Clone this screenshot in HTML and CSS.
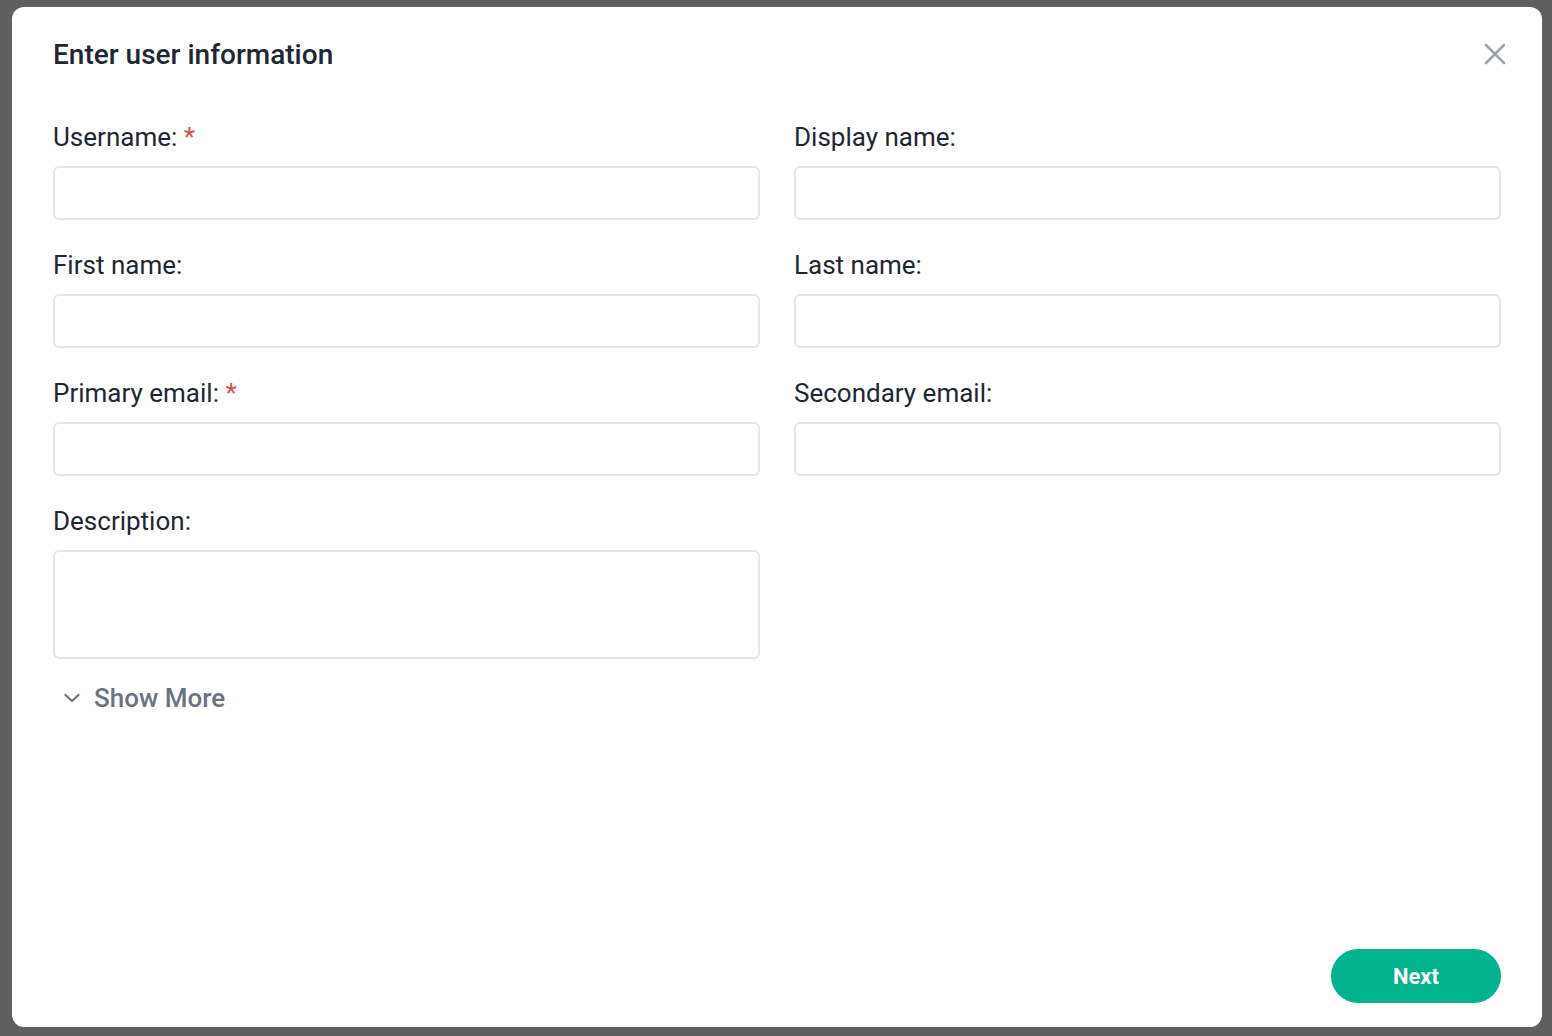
FILE: index.html
```html
<!DOCTYPE html>
<html>
<head>
<meta charset="utf-8">
<link rel="stylesheet" href="styles.css">
</head>
<body>
<div class="modal">
  <div class="header">
    <h1 class="title">Enter user information</h1>
    <button class="close" aria-label="Close">
      <svg width="24" height="24" viewBox="0 0 24 24"><path d="M3 3 L21 21 M21 3 L3 21" stroke="#9ca3af" stroke-width="2.6" stroke-linecap="round"/></svg>
    </button>
  </div>
  <form class="form">
    <div class="field">
      <label class="label">Username: <span class="req">*</span></label>
      <input class="input" type="text">
    </div>
    <div class="field">
      <label class="label">Display name:</label>
      <input class="input" type="text">
    </div>
    <div class="field">
      <label class="label">First name:</label>
      <input class="input" type="text">
    </div>
    <div class="field">
      <label class="label">Last name:</label>
      <input class="input" type="text">
    </div>
    <div class="field">
      <label class="label">Primary email: <span class="req">*</span></label>
      <input class="input" type="text">
    </div>
    <div class="field">
      <label class="label">Secondary email:</label>
      <input class="input" type="text">
    </div>
    <div class="field">
      <label class="label">Description:</label>
      <textarea class="textarea"></textarea>
    </div>
  </form>
  <button class="show-more" type="button">
    <svg width="20" height="20" viewBox="0 0 20 20"><path d="M3.5 7 L10 13 L16.5 7" fill="none" stroke="#6b7280" stroke-width="2.2" stroke-linecap="round" stroke-linejoin="round"/></svg>
    <span>Show More</span>
  </button>
  <div class="footer">
    <button class="next" type="button">Next</button>
  </div>
</div>
</body>
</html>
```
FILE: styles.css
```css
* { box-sizing: border-box; }
html, body { margin: 0; padding: 0; }
body {
  background: #5f5f5f;
  font-family: Roboto, "Liberation Sans", sans-serif;
  height: 1036px;
  overflow: hidden;
}
.modal {
  margin: 7px 10px 0 12px;
  height: 1020px;
  background: #ffffff;
  border-radius: 12px;
  padding: 30px 41px 24px 41px;
  display: flex;
  flex-direction: column;
}
.header {
  display: flex;
  align-items: center;
  justify-content: space-between;
  height: 36px;
}
.title {
  margin: 0;
  font-size: 28px;
  font-weight: 500;
  color: #1e2733;
  line-height: 36px;
}
.close {
  background: none;
  border: 0;
  padding: 0;
  width: 24px;
  height: 24px;
  margin-right: -6px;
  margin-top: -2px;
  cursor: pointer;
}
.close svg { display: block; }
.form {
  margin-top: 50px;
  display: grid;
  grid-template-columns: 1fr 1fr;
  column-gap: 34px;
  row-gap: 31px;
}
.field {
  display: flex;
  flex-direction: column;
  gap: 15px;
}
.label {
  font-size: 26px;
  line-height: 28px;
  color: #1e2733;
  font-weight: 400;
}
.req { color: #e5484d; }
.input, .textarea {
  display: block;
  width: 100%;
  border: 2px solid #e2e5e9;
  border-radius: 6px;
  background: #fff;
  font: inherit;
}
.input { height: 54px; }
.textarea { height: 109px; resize: none; }
.show-more {
  align-self: flex-start;
  margin-top: 25px;
  margin-left: 9px;
  background: none;
  border: 0;
  padding: 0;
  display: flex;
  align-items: center;
  gap: 12px;
  font-family: inherit;
  font-size: 26px;
  font-weight: 500;
  color: #6b7280;
  line-height: 28px;
}
.show-more svg { display: block; }
.footer {
  margin-top: auto;
  display: flex;
  justify-content: flex-end;
}
.next {
  width: 170px;
  height: 54px;
  border: 0;
  border-radius: 27px;
  background: #00b28d;
  color: #ffffff;
  font-family: inherit;
  font-size: 22px;
  font-weight: 700;
}
```
